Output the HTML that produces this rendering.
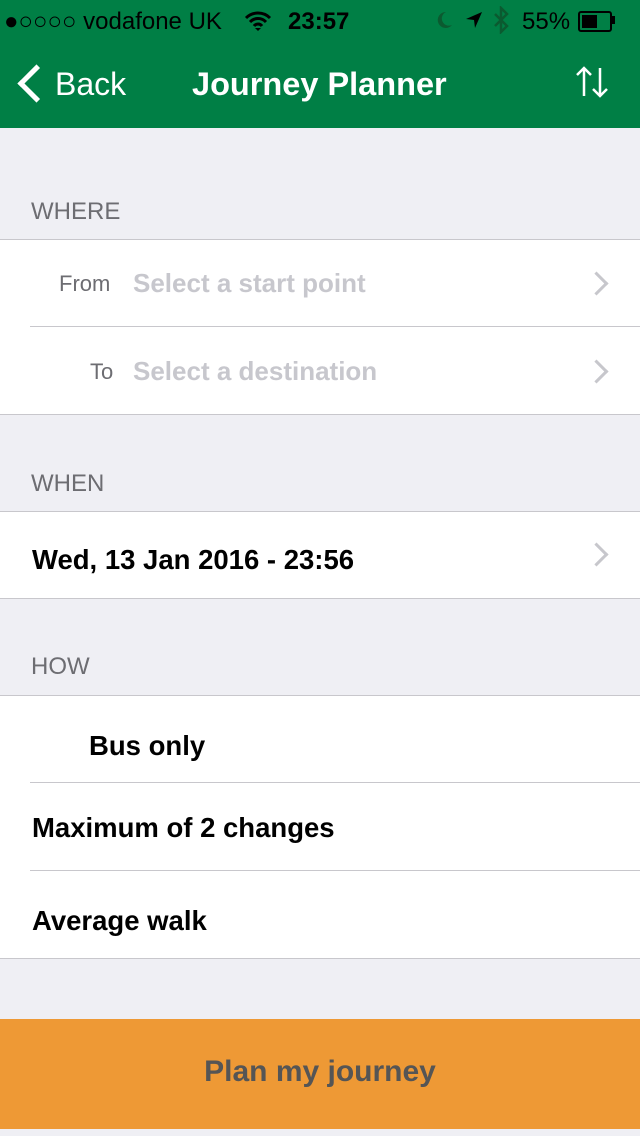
<!DOCTYPE html><html><head><style>
body{margin:0;width:640px;height:1136px;background:#efeff4;font-family:"Liberation Sans",sans-serif;position:relative;overflow:hidden}
.a{position:absolute}
.hdr{left:0;top:0;width:640px;height:128px;background:#007f45}
.lbl{left:31px;font-size:24px;color:#6d6d72}
.grp{left:0;width:640px;background:#fff;border-top:1px solid #c8c7cc;border-bottom:1px solid #c8c7cc}
.sep{left:30px;right:0;height:1px;background:#c8c7cc}
.t{font-size:27.5px;font-weight:bold;color:#000}
.ph{font-size:26px;font-weight:bold;color:#c7c7cd}
.chev{width:14px;height:14px;border-right:3px solid #c7c7cc;border-top:3px solid #c7c7cc;transform:rotate(45deg)}
</style></head><body>
<div class="a hdr"></div>
<div class="a" style="left:4px;top:8px;font-size:24px;color:#000">●○○○○ vodafone UK</div>
<svg class="a" style="left:244px;top:10px" width="28" height="22" viewBox="0 0 28 22"><path d="M2 8a17 17 0 0 1 24 0M6 12a11 11 0 0 1 16 0M10 16a5 5 0 0 1 8 0" stroke="#000" stroke-width="3" fill="none"/><path d="M11 18l3 3 3-3z" fill="#000"/></svg>
<div class="a" style="left:288px;top:8px;font-size:24px;font-weight:bold">23:57</div>
<svg class="a" style="left:434px;top:10px" width="20" height="20" viewBox="0 0 20 20"><path d="M12 2a8 8 0 1 0 6 13A7 7 0 0 1 12 2z" fill="#0b5a30"/></svg>
<svg class="a" style="left:464px;top:10px" width="20" height="20" viewBox="0 0 20 20"><path d="M18 2L2 9l8 1 1 8z" fill="#000"/></svg>
<svg class="a" style="left:492px;top:6px" width="18" height="28" viewBox="0 0 18 28"><path d="M3 8l12 12-6 6V2l6 6L3 20" stroke="#0b5a30" stroke-width="2.5" fill="none"/></svg>
<div class="a" style="left:522px;top:8px;font-size:24px;color:#000">55%</div>
<div class="a" style="left:578px;top:11px;width:30px;height:17px;border:2px solid #000;border-radius:3px"><div style="margin:2px;width:15px;height:13px;background:#000"></div></div>
<div class="a" style="left:612px;top:16px;width:3px;height:8px;background:#000"></div>
<div class="a" style="left:23px;top:70px;width:22px;height:22px;border-left:5px solid #fff;border-bottom:5px solid #fff;transform:rotate(45deg)"></div>
<div class="a" style="left:55px;top:66px;font-size:32px;color:#fff">Back</div>
<div class="a" style="left:192px;top:66px;font-size:32.5px;font-weight:bold;color:#fff">Journey Planner</div>
<svg class="a" style="left:574px;top:64px" width="36" height="36" viewBox="0 0 36 36"><path d="M10 32V4M3 11l7-7 7 7M26 4v28M19 25l7 7 7-7" stroke="#fff" stroke-width="2.5" fill="none"/></svg>
<div class="a lbl" style="top:198px">WHERE</div>
<div class="a grp" style="top:239px;height:174px"></div>
<div class="a sep" style="top:326px"></div>
<div class="a" style="left:59px;top:271px;font-size:22px;color:#6d6d72">From</div>
<div class="a ph" style="left:133px;top:268px">Select a start point</div>
<div class="a chev" style="left:588px;top:275px"></div>
<div class="a" style="left:90px;top:359px;font-size:22px;color:#6d6d72">To</div>
<div class="a ph" style="left:133px;top:356px">Select a destination</div>
<div class="a chev" style="left:588px;top:363px"></div>
<div class="a lbl" style="top:470px">WHEN</div>
<div class="a grp" style="top:511px;height:86px"></div>
<div class="a t" style="left:32px;top:544px">Wed, 13 Jan 2016 - 23:56</div>
<div class="a chev" style="left:588px;top:546px"></div>
<div class="a lbl" style="top:653px">HOW</div>
<div class="a grp" style="top:695px;height:262px"></div>
<div class="a sep" style="top:782px"></div>
<div class="a sep" style="top:870px"></div>
<div class="a t" style="left:89px;top:730px">Bus only</div>
<div class="a t" style="left:32px;top:812px">Maximum of 2 changes</div>
<div class="a t" style="left:32px;top:905px">Average walk</div>
<div class="a" style="left:0;top:1019px;width:640px;height:110px;background:#ee9935"></div>
<div class="a" style="left:0;top:1055px;width:640px;text-align:center;font-size:30px;font-weight:bold;color:#555">Plan my journey</div>
</body></html>
